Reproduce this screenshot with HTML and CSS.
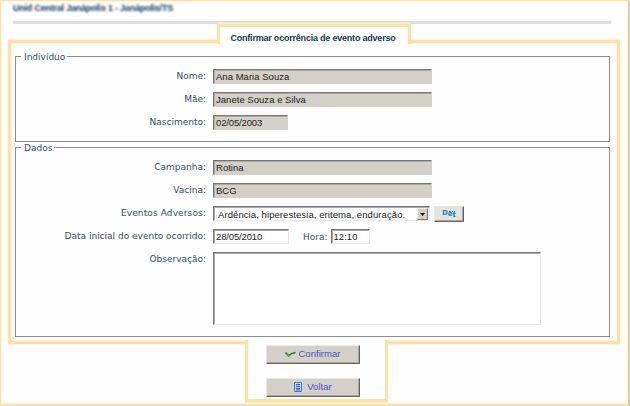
FILE: index.html
```
<!DOCTYPE html>
<html lang="pt-BR">
<head>
<meta charset="utf-8">
<title>Confirmar ocorrência de evento adverso</title>
<link rel="stylesheet" href="styles.css">
</head>
<body>
<div class="page">
  <header class="unit"><span class="unit-name">Unid Central Janápolis 1 - Janápolis/TS</span></header>
  <h1 class="tab"><span class="tab-text">Confirmar ocorrência de evento adverso</span></h1>
  <main class="panel">
    <section class="group person">
      <h2 class="legend"><span class="legend-person">Indivíduo</span></h2>
      <div class="row"><span class="label">Nome:</span><span class="field wide off">Ana Maria Souza</span></div>
      <div class="row"><span class="label">Mãe:</span><span class="field wide off">Janete Souza e Silva</span></div>
      <div class="row"><span class="label">Nascimento:</span><span class="field date off">02/05/2003</span></div>
    </section>
    <section class="group data">
      <h2 class="legend"><span>Dados</span></h2>
      <div class="row"><span class="label">Campanha:</span><span class="field wide off">Rotina</span></div>
      <div class="row"><span class="label">Vacina:</span><span class="field wide off">BCG</span></div>
      <div class="row"><span class="label events">Eventos Adversos:</span><span class="field select"><span class="option">Ardência, hiperestesia, eritema, enduração.</span><span class="arrow"><svg width="5" height="3" viewBox="0 0 5 3"><path d="M0 0h5L2.500 3z"/></svg></span></span><button class="det" aria-label="Detalhes"><span>D</span><span class="det-e">e</span><span class="det-t">t</span><i class="dots"></i></button></div>
      <div class="row"><span class="label start">Data inicial do evento ocorrido:</span><span class="field date">28/05/2010</span><span class="hour">Hora:</span><span class="field time">12:10</span></div>
      <div class="row tall"><span class="label">Observação:</span><span class="field notes"></span></div>
    </section>
  </main>
  <footer class="actions">
    <button class="action"><svg width="11" height="8" viewBox="0 0 11 8"><path d="M.5 2.500 3.500 5.800Q6 3 10.500 2.500" fill="none" stroke="#247a2c" stroke-width="1.600"/><path d="M1.500 2.500 4 6.800" stroke="#58ad57" stroke-width="1"/></svg><span>Confirmar</span></button>
    <button class="action back"><svg width="8" height="10" viewBox="0 0 8 10"><path d="M.5.500h7v9h-7z" fill="#b9d2ff" stroke="#4779df"/><path d="M2 2.500h4M2 4.500h4M2 6.500h4M2 8h4" stroke="#285cd0"/></svg><span>Voltar</span></button>
  </footer>
</div>
</body>
</html>
```
FILE: styles.css
```
* { box-sizing: border-box; }
body { margin: 0; background: #fefefe; }
.page {
  width: 630px; height: 406px; overflow: hidden;
  border: 1px solid #fbe3b0; border-width: 1px 2px 2px 1px;
  border-right-color: #dccfa9;
  box-shadow: inset 0 0 3px #fbe5b6;
  font-family: "DejaVu Sans", Verdana, sans-serif;
  font-size: 9px; color: #2f4f68;
}
.unit {
  height: 23px; margin: 0 17px 0 12px; padding-top: 1px;
  border-bottom: 3px solid #dedede;
  font: bold 9px/13px "Liberation Sans", Arial, sans-serif; color: #0b3252;
}
.unit-name { display: inline-block; filter: blur(1px); letter-spacing: -.22px; white-space: nowrap; }
.tab {
  position: relative; z-index: 1;
  width: 194px; height: 20px; margin: 0 0 -4px 216px;
  background: #fefefe; border: 3px solid #fde1a6; border-bottom: 0;
  box-shadow: 0 -1px 1px #fdedc8;
  display: flex; justify-content: center;
  font: bold 9px/22px "Liberation Sans", Arial, sans-serif; color: #143850;
  white-space: nowrap; letter-spacing: -.21px;
}
.tab-text { margin-right: 2px; }
.panel {
  width: 612px; height: 304px; margin-left: 7px; padding: 13px 7px 0 4px;
  border: 3px solid #fde1a6;
  box-shadow: 0 0 2px #fde2a8, inset 0 0 2px #fde2a8;
}
.group { border: 1px solid #898d91; width: 595px; }
.person { height: 86px; }
.data { height: 190px; margin-top: 5px; }
.legend {
  display: flex; height: 12px; margin: -6px 0 6px 5px;
  font-size: 9px; line-height: 13px; font-weight: normal;
}
.legend span { background: #fefefe; padding: 0 2px 0 3px; }
.row { display: flex; height: 23px; align-items: flex-start; white-space: nowrap; }
.label { width: 190px; margin-right: 7px; text-align: right; line-height: 15px; }
.events { letter-spacing: .12px; }
.field {
  height: 15px; padding-left: 2px; line-height: 14px;
  font-family: "Liberation Sans", Arial, sans-serif; font-size: 9.500px; letter-spacing: .03px; color: #222;
  border: 1px solid #e8e8e6; border-top: 1px solid #777; border-left: 1px solid #777;
  box-shadow: inset 1px 1px #aaa;
  background: #fff;
}
.off { background: #d4d0c8; border-right-color: #d4d0c8; border-bottom-color: #d4d0c8; }
.wide { width: 219px; }
.date { width: 76px; letter-spacing: -.15px; }
.date.off { width: 75px; }
.select { width: 217px; display: flex; justify-content: space-between; padding: 1px 1px 0 4px; line-height: 13px; letter-spacing: .08px; }
.arrow {
  width: 11px; height: 12px; background: #d4d0c8; display: flex; align-items: center; justify-content: center;
  border: 1px solid #eee; border-right-color: #777; border-bottom-color: #777;
}
.arrow svg { fill: #111; }
.hour { margin: 0 3px 0 14px; line-height: 16px; }
.time { width: 39px; }
.notes { width: 328px; height: 73px; }
.tall { height: 73px; }
button { padding: 0; margin: 0; background: #d4d0c8; border: 1px solid #ebe9e4; border-right-color: #65635f; border-bottom-color: #65635f; box-shadow: inset -1px -1px #aaa7a0; }
.det {
  position: relative; width: 30px; height: 16px; margin-left: 4px; background: #e2e2df;
  display: flex; justify-content: center; align-items: flex-start;
  font: bold 7px/13px "DejaVu Sans", sans-serif; color: #1682c5;
}
.det-e { margin-top: 1px; }
.det-t { margin-top: 2px; }
.dots { position: absolute; left: 14px; top: 4px; width: 6px; border-top: 1px dotted #1682c5; }
.actions {
  position: relative; z-index: 1; width: 143px; height: 62px; margin: -4px 0 0 244px; padding-top: 5px;
  background: #fefefe; border: 3px solid #fde1a6; border-top: 0;
  box-shadow: 0 1px 1px #fdedc8;
  display: flex; flex-direction: column; align-items: flex-start; gap: 14px;
}
.action {
  width: 94px; height: 19px; flex: none; margin-left: 18px; padding-bottom: 2px;
  display: flex; align-items: center; justify-content: center; gap: 2px;
  font: 9.500px/14px "Liberation Sans", Arial, sans-serif; letter-spacing: .05px; color: #3b57c9;
}
.action svg { margin-top: 1px; }
.back { gap: 5px; }
```
